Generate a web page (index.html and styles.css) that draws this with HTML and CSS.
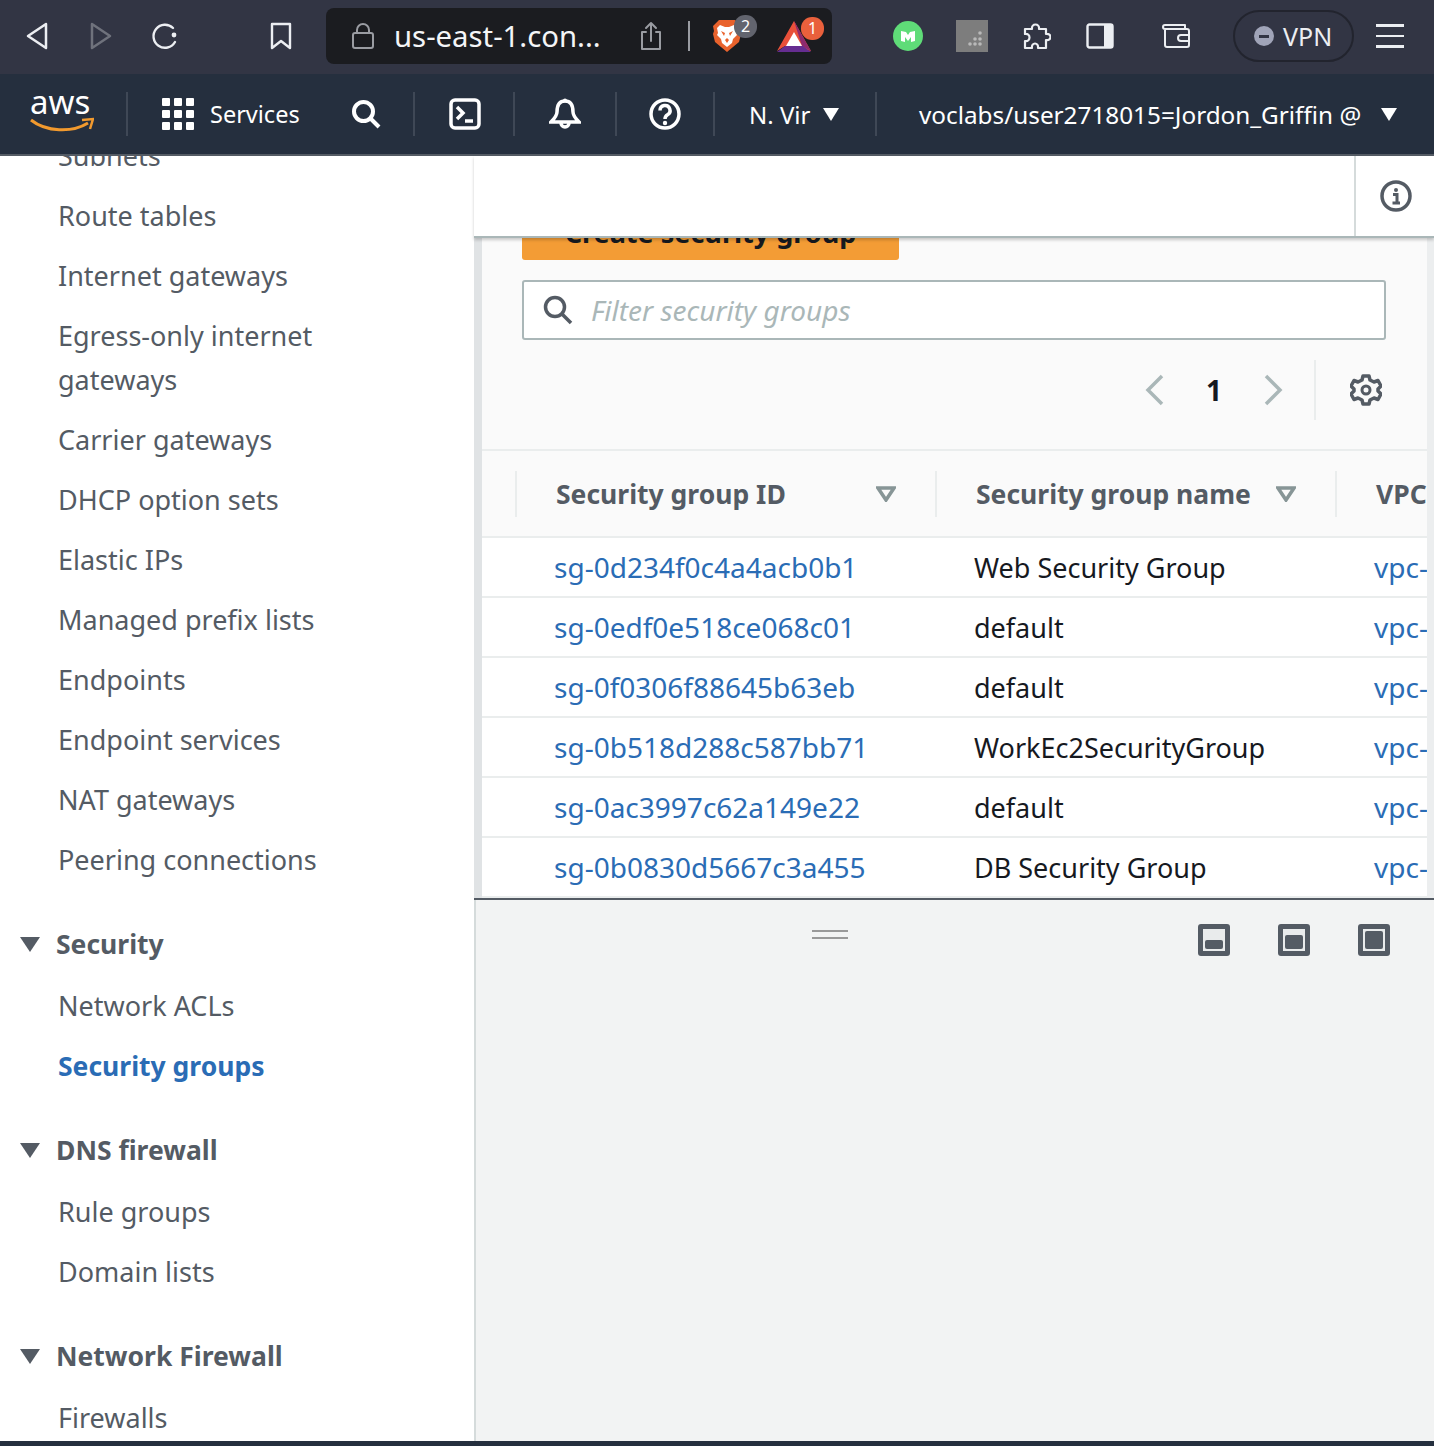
FILE: index.html
```html
<!DOCTYPE html>
<html>
<head>
    <title>Security Groups | VPC Console</title>
    <link rel="stylesheet" href="styles.css">
</head>
<body>
    <!-- Browser toolbar -->
    <div class="toolbar">
        <div class="tb-btn tb-first">
            <svg width="24" height="30" viewBox="0 0 24 30"><path d="M21 3 L3 15 L21 27 Z" class="line" stroke-width="2.5"/></svg>
        </div>
        <div class="tb-btn">
            <svg width="24" height="30" viewBox="0 0 24 30"><path d="M3 3 L21 15 L3 27 Z" class="line dim" stroke-width="2.5"/></svg>
        </div>
        <div class="tb-btn">
            <svg width="30" height="30" viewBox="0 0 30 30"><path d="M23 7 A11.5 11.5 0 1 0 25 21" class="line" stroke-width="2.4"/><circle cx="24" cy="14" r="2.4" fill="#eceef2"/></svg>
        </div>
        <div class="tb-btn tb-bookmark">
            <svg width="22" height="28" viewBox="0 0 22 28"><path d="M2 2 H20 V26 L11 19 L2 26 Z" class="line" stroke-width="2.4"/></svg>
        </div>
        <div class="urlbar">
            <svg class="url-lock" width="24" height="28" viewBox="0 0 24 28"><rect x="2" y="11" width="20" height="15" rx="2" class="line dim2" stroke-width="2"/><path d="M6 11 V8 A6 6 0 0 1 18 8 V11" class="line dim2" stroke-width="2"/></svg>
            <span class="url-text">us-east-1.con...</span>
            <svg class="url-share" width="22" height="30" viewBox="0 0 22 30"><path d="M6 11 H2 V28 H20 V11 H16" class="line dim2" stroke-width="2"/><path d="M11 20 V2 M6 7 L11 2 L16 7" class="line dim2" stroke-width="2"/></svg>
            <span class="url-sep"></span>
            <div class="shield">
                <svg width="30" height="34" viewBox="0 0 30 34"><path d="M7 1 H23 L29 7 L28 12 L29 15 L27 23 L15 33 L3 23 L1 15 L2 12 L1 7 Z" fill="#e9622c"/><path d="M8 6 L13 8 H17 L22 6 L25 9 L24 14 L25 16 L21 20 L20 24 L15 28 L10 24 L9 20 L5 16 L6 14 L5 9 Z" fill="#fff"/><path d="M9 12 L13 14 L12 17 Z M21 12 L17 14 L18 17 Z M13 21 L15 19 L17 21 L15 24 Z" fill="#e9622c"/></svg>
                <span class="badge badge-gray">2</span>
            </div>
            <div class="bat">
                <svg width="36" height="33" viewBox="0 0 36 33"><path d="M18 1 L35 31 L9 26 L1 31 Z" fill="#e9503a"/><path d="M18 1 L35 31 L26 26 Z" fill="#8e2a6e"/><path d="M1 32 L9 26 H27 L35 32 Z" fill="#662d91"/><path d="M18 12 L26 26 H10 Z" fill="#fff"/></svg>
                <span class="badge badge-red">1</span>
            </div>
        </div>
        <div class="tb-btn tb-ext-first">
            <svg width="30" height="30" viewBox="0 0 30 30"><circle cx="15" cy="15" r="15" fill="#5fdc78"/><path d="M8 10 L13 11 L15 14 L17 11 L22 10 V20 L18 21 V16 L15 20 L12 16 V21 L8 20 Z" fill="#fff"/></svg>
        </div>
        <div class="tb-btn">
            <svg width="32" height="32" viewBox="0 0 32 32"><rect width="32" height="32" fill="#7d7d7d"/><g fill="#b9b9b9"><circle cx="24" cy="13" r="1.8"/><circle cx="19" cy="19" r="1.8"/><circle cx="24" cy="19" r="1.8"/><circle cx="14" cy="24" r="1.8"/><circle cx="19" cy="24" r="1.8"/><circle cx="24" cy="24" r="1.8"/></g></svg>
        </div>
        <div class="tb-btn">
            <svg width="30" height="30" viewBox="0 0 30 30"><path d="M4 8 H11 C10 2 19 2 18 8 H25 V13 C31 12 31 20 25 19 V27 H17 C18 21 10 21 11 27 H4 V20 C10 21 10 12 4 13 Z" class="line" stroke-width="2.2"/></svg>
        </div>
        <div class="tb-btn">
            <svg width="28" height="26" viewBox="0 0 28 26"><rect x="1.5" y="1.5" width="25" height="23" rx="2" class="line" stroke-width="2.4"/><path d="M18 1.5 H25 A1.5 1.5 0 0 1 26.5 3 V23 A1.5 1.5 0 0 1 25 24.500 H18 Z" fill="#eceef2"/></svg>
        </div>
        <div class="tb-btn tb-wallet">
            <svg width="28" height="26" viewBox="0 0 28 26"><path d="M3 6 V22 A2 2 0 0 0 5 24 H25 A2 2 0 0 0 27 22 V8 A2 2 0 0 0 25 6 H3 A2 2 0 0 1 3 2 H23 V6" class="line" stroke-width="2"/><path d="M27 12 H19 A2.500 2.500 0 0 0 19 18 H27" class="line" stroke-width="2"/></svg>
        </div>
        <div class="vpn">
            <span class="vpn-dot"></span>
            <span>VPN</span>
        </div>
        <div class="hamburger">
            <span></span><span></span><span></span>
        </div>
    </div>

    <!-- AWS console bar -->
    <div class="consolebar">
        <div class="cb-logo">
            <span class="aws-word">aws</span>
            <svg class="aws-smile" width="64" height="16" viewBox="0 0 64 16"><path d="M1 3 C16 15 42 16 58 6" fill="none" stroke="#f29a2e" stroke-width="3"/><path d="M52 3 L63 2 L60 12" fill="none" stroke="#f29a2e" stroke-width="2.5"/></svg>
        </div>
        <div class="cb-section cb-services">
            <div class="waffle">
                <span></span><span></span><span></span><span></span><span></span><span></span><span></span><span></span><span></span>
            </div>
            <span class="services-label">Services</span>
            <svg class="cb-search" width="30" height="30" viewBox="0 0 30 30"><circle cx="12.500" cy="12.500" r="9.500" fill="none" stroke="#fff" stroke-width="4"/><path d="M19 19 L28 28" stroke="#fff" stroke-width="4"/></svg>
        </div>
        <div class="cb-section cb-icon cb-terminal">
            <svg width="32" height="32" viewBox="0 0 32 32"><rect x="2" y="2" width="28" height="28" rx="4" fill="none" stroke="#fff" stroke-width="3.500"/><path d="M8 9 L14 15 L8 21" fill="none" stroke="#fff" stroke-width="3.500"/><path d="M16 23 H24" stroke="#fff" stroke-width="3.500"/></svg>
        </div>
        <div class="cb-section cb-icon cb-bell">
            <svg width="32" height="32" viewBox="0 0 32 32"><path d="M16 3 C10 3 8 8 8 14 C8 18 5 21 2 24 H30 C27 21 24 18 24 14 C24 8 22 3 16 3 Z" fill="none" stroke="#fff" stroke-width="3.500"/><circle cx="16" cy="2.500" r="2" fill="#fff"/><path d="M12 25 A4 4 0 0 0 20 25" fill="none" stroke="#fff" stroke-width="3.500"/></svg>
        </div>
        <div class="cb-section cb-icon cb-help">
            <svg width="32" height="32" viewBox="0 0 32 32"><circle cx="16" cy="16" r="14" fill="none" stroke="#fff" stroke-width="3.500"/><path d="M11 12.500 A5 5 0 1 1 18.500 16.800 C16.800 17.800 16 18.500 16 21" fill="none" stroke="#fff" stroke-width="3.500"/><circle cx="16" cy="25" r="2.200" fill="#fff"/></svg>
        </div>
        <div class="cb-section cb-region">
            <span>N. Vir</span>
            <span class="caret"></span>
        </div>
        <div class="cb-section cb-account">
            <span>voclabs/user2718015=Jordon_Griffin @</span>
            <span class="caret"></span>
        </div>
    </div>

    <div class="console">
        <!-- Left navigation -->
        <div class="sidenav">
            <ul class="nav-list">
                <li>Subnets</li>
                <li>Route tables</li>
                <li>Internet gateways</li>
                <li>Egress-only internet<br>gateways</li>
                <li>Carrier gateways</li>
                <li>DHCP option sets</li>
                <li>Elastic IPs</li>
                <li>Managed prefix lists</li>
                <li>Endpoints</li>
                <li>Endpoint services</li>
                <li>NAT gateways</li>
                <li>Peering connections</li>
            </ul>
            <h3 class="nav-head"><span class="nav-caret"></span>Security</h3>
            <ul class="nav-list">
                <li>Network ACLs</li>
                <li class="active">Security groups</li>
            </ul>
            <h3 class="nav-head"><span class="nav-caret"></span>DNS firewall</h3>
            <ul class="nav-list">
                <li>Rule groups</li>
                <li>Domain lists</li>
            </ul>
            <h3 class="nav-head"><span class="nav-caret"></span>Network Firewall</h3>
            <ul class="nav-list">
                <li>Firewalls</li>
            </ul>
        </div>

        <div class="content">
            <div class="top-pane">
                <div class="page-header">
                    <div class="info-box">
                        <svg width="32" height="32" viewBox="0 0 32 32"><circle cx="16" cy="16" r="14" fill="none" stroke="#545b64" stroke-width="3.500"/><circle cx="16" cy="10" r="2" fill="#545b64"/><path d="M13 14.500 H17 V22 M12.500 23 H20" fill="none" stroke="#545b64" stroke-width="3"/></svg>
                    </div>
                </div>
                <div class="panel">
                    <div class="panel-scroll">
                        <button class="btn-create">Create security group</button>
                        <div class="filter">
                            <svg width="30" height="30" viewBox="0 0 30 30"><circle cx="12" cy="12" r="9.500" fill="none" stroke="#545b64" stroke-width="3.500"/><path d="M18 18 L28 28" stroke="#545b64" stroke-width="3.500"/></svg>
                            <span class="filter-text">Filter security groups</span>
                        </div>
                        <div class="pager">
                            <svg width="20" height="32" viewBox="0 0 20 32"><path d="M17 2 L3 16 L17 30" fill="none" stroke="#aab7b8" stroke-width="3.500"/></svg>
                            <span class="page-num">1</span>
                            <svg width="20" height="32" viewBox="0 0 20 32"><path d="M3 2 L17 16 L3 30" fill="none" stroke="#aab7b8" stroke-width="3.500"/></svg>
                            <div class="pager-gear">
                                <svg width="32" height="32" viewBox="0 0 32 32"><path d="M13 2 H19 L20 6 L24 8 L28 6.500 L31 12 L28 15 V17 L31 20 L28 25.500 L24 24 L20 26 L19 30 H13 L12 26 L8 24 L4 25.500 L1 20 L4 17 V15 L1 12 L4 6.500 L8 8 L12 6 Z" fill="none" stroke="#545b64" stroke-width="3.500" stroke-linejoin="round"/><circle cx="16" cy="16" r="4" fill="none" stroke="#545b64" stroke-width="3"/></svg>
                            </div>
                        </div>
                        <table class="sg-table">
                            <thead>
                                <tr>
                                    <th class="col-select"></th>
                                    <th class="col-id"><div class="th-in"><span>Security group ID</span><svg class="sort" width="20" height="16" viewBox="0 0 20 16"><path d="M2 2 H18 L10 14 Z" fill="none" stroke="#879596" stroke-width="3.500"/></svg></div></th>
                                    <th class="col-name"><div class="th-in"><span>Security group name</span><svg class="sort" width="20" height="16" viewBox="0 0 20 16"><path d="M2 2 H18 L10 14 Z" fill="none" stroke="#879596" stroke-width="3.500"/></svg></div></th>
                                    <th class="col-vpc"><div class="th-in"><span>VPC</span></div></th>
                                </tr>
                            </thead>
                            <tbody>
                                <tr><td></td><td><a>sg-0d234f0c4a4acb0b1</a></td><td>Web Security Group</td><td><a>vpc-</a></td></tr>
                                <tr><td></td><td><a>sg-0edf0e518ce068c01</a></td><td>default</td><td><a>vpc-</a></td></tr>
                                <tr><td></td><td><a>sg-0f0306f88645b63eb</a></td><td>default</td><td><a>vpc-</a></td></tr>
                                <tr><td></td><td><a>sg-0b518d288c587bb71</a></td><td>WorkEc2SecurityGroup</td><td><a>vpc-</a></td></tr>
                                <tr><td></td><td><a>sg-0ac3997c62a149e22</a></td><td>default</td><td><a>vpc-</a></td></tr>
                                <tr><td></td><td><a>sg-0b0830d5667c3a455</a></td><td>DB Security Group</td><td><a>vpc-</a></td></tr>
                            </tbody>
                        </table>
                    </div>
                </div>
            </div>
            <div class="split-bar">
                <div class="split-handle"></div>
                <div class="split-btns">
                    <span class="split-btn small"><span></span></span>
                    <span class="split-btn medium"><span></span></span>
                    <span class="split-btn large"><span></span></span>
                </div>
            </div>
        </div>
    </div>
    <div class="footer-edge"></div>
</body>
</html>
```

FILE: styles.css
```css
* {
    box-sizing: border-box;
}

html, body {
    height: 100%;
}

body {
    margin: 0;
    height: 100vh;
    overflow: hidden;
    display: flex;
    flex-direction: column;
    font-family: "Noto Sans", Arial, sans-serif;
    font-size: 27px;
    color: #16191f;
    background-color: #f2f3f3;
}

.line {
    fill: none;
    stroke: #eceef2;
    stroke-linejoin: round;
    stroke-linecap: round;
}

.line.dim {
    stroke: #6f727c;
}

.line.dim2 {
    stroke: #9a9ca2;
}

/* Browser toolbar */
.toolbar {
    height: 74px;
    flex: none;
    padding-bottom: 2px;
    display: flex;
    align-items: center;
    background-color: #323544;
}

.tb-btn {
    width: 64px;
    height: 56px;
    flex: none;
    display: flex;
    justify-content: center;
    align-items: center;
}

.tb-first {
    margin-left: 5px;
}

.tb-bookmark {
    margin-left: 52px;
}

.urlbar {
    width: 506px;
    height: 56px;
    margin-left: 13px;
    padding-left: 25px;
    flex: none;
    display: flex;
    align-items: center;
    background-color: #1b1c20;
    border-radius: 8px;
}

.url-text {
    width: 246px;
    margin-left: 19px;
    font-size: 29.3px;
    color: #f4f5f7;
    white-space: nowrap;
}

.url-sep {
    width: 2px;
    height: 30px;
    margin-left: 26px;
    background-color: #9a9ca2;
}

.shield, .bat {
    position: relative;
    display: flex;
}

.shield {
    margin-left: 22px;
}

.bat {
    margin-left: 34px;
}

.badge {
    position: absolute;
    width: 23px;
    height: 23px;
    border-radius: 11px;
    font-size: 16px;
    line-height: 23px;
    text-align: center;
    color: #fff;
}

.shield .badge {
    top: -4px;
    left: 22px;
}

.bat .badge {
    top: -3px;
    left: 25px;
}

.badge-gray {
    background-color: #62646e;
}

.badge-red {
    background-color: #e9603c;
}

.tb-ext-first {
    margin-left: 44px;
}

.tb-wallet {
    margin-left: 12px;
}

.vpn {
    width: 121px;
    height: 52px;
    margin-left: 25px;
    padding-left: 19px;
    flex: none;
    display: flex;
    align-items: center;
    gap: 9px;
    font-size: 25px;
    color: #eceef2;
    border: 2px solid #22242e;
    border-radius: 26px;
}

.vpn-dot {
    width: 20px;
    height: 20px;
    border-radius: 50%;
    background-color: #a0a4b8;
    position: relative;
}

.vpn-dot::after {
    content: "";
    position: absolute;
    left: 5px;
    top: 9px;
    width: 10px;
    height: 3px;
    background-color: #323544;
}

.hamburger {
    width: 28px;
    margin-left: 22px;
    display: flex;
    flex-direction: column;
    gap: 8px;
}

.hamburger span {
    height: 2.5px;
    background-color: #eceef2;
}

/* AWS console bar */
.consolebar {
    height: 82px;
    flex: none;
    display: flex;
    align-items: center;
    background-color: #252f3e;
    border-bottom: 2px solid #545b64;
    color: #fff;
    font-size: 24px;
}

.cb-logo {
    width: 126px;
    padding-left: 30px;
    flex: none;
    position: relative;
}

.aws-word {
    display: block;
    font-size: 33px;
    line-height: 34px;
    margin-top: -10px;
}

.aws-smile {
    display: block;
    margin-top: -2px;
}

.cb-section {
    height: 44px;
    flex: none;
    display: flex;
    align-items: center;
    border-left: 2px solid #3f4856;
}

.cb-services {
    width: 287px;
    padding-left: 34px;
}

.waffle {
    width: 32px;
    display: grid;
    grid-template-columns: repeat(3, 8px);
    gap: 4px;
}

.waffle span {
    height: 8px;
    background-color: #fff;
    border-radius: 1px;
}

.services-label {
    margin-left: 16px;
    font-size: 23.5px;
}

.cb-search {
    margin-left: 51px;
}

.cb-icon {
    justify-content: center;
}

.cb-terminal {
    width: 100px;
    padding-left: 2px;
}

.cb-bell {
    width: 102px;
}

.cb-help {
    width: 98px;
}

.cb-region {
    width: 162px;
    padding-left: 34px;
}

.cb-account {
    padding-left: 42px;
    font-size: 24.3px;
}

.caret {
    width: 0;
    height: 0;
    margin-left: 13px;
    border-left: 8px solid transparent;
    border-right: 8px solid transparent;
    border-top: 13px solid #fff;
}

.cb-account .caret {
    margin-left: 20px;
}

/* Main area */
.console {
    flex: 1;
    min-height: 0;
    display: flex;
}

.sidenav {
    width: 474px;
    flex: none;
    overflow: hidden;
    background-color: #fff;
    color: #545b64;
}

.sidenav .nav-list:first-child {
    margin-top: -30px;
}

.nav-list {
    margin: 0;
    padding: 0;
    list-style: none;
}

.nav-list li {
    padding: 8px 0 8px 58px;
    line-height: 44px;
}

.nav-list li.active {
    color: #2a6cb5;
    font-size: 26.5px;
    font-weight: 700;
}

.nav-head {
    margin: 32px 0 10px;
    height: 44px;
    display: flex;
    align-items: center;
    font-size: 26.5px;
    line-height: 44px;
    font-weight: 700;
    color: #545b64;
}

.nav-caret {
    width: 0;
    height: 0;
    margin: 0 16px 0 20px;
    border-left: 10px solid transparent;
    border-right: 10px solid transparent;
    border-top: 15px solid #545b64;
}

.content {
    flex: 1;
    min-width: 0;
    display: flex;
    flex-direction: column;
}

.top-pane {
    height: 744px;
    flex: none;
    display: flex;
    flex-direction: column;
    background-color: #eceeef;
    border-bottom: 2px solid #545b64;
}

.page-header {
    height: 82px;
    flex: none;
    display: flex;
    justify-content: flex-end;
    background-color: #fff;
    border-bottom: 2px solid #aab7b8;
    box-shadow: 0 2px 3px rgba(0, 0, 0, 0.2);
    position: relative;
    z-index: 1;
}

.info-box {
    width: 80px;
    padding-left: 2px;
    display: flex;
    justify-content: center;
    align-items: center;
    border-left: 2px solid #d5dbdb;
}

.panel {
    flex: 1;
    min-height: 0;
    overflow: hidden;
    background-color: #fafafa;
    margin-right: 7px;
    border-left: 8px solid #e0e3e5;
}

.panel-scroll {
    margin-top: -38px;
}

.btn-create {
    display: block;
    width: 377px;
    height: 60px;
    margin-left: 40px;
    padding: 4px 0 0;
    font-family: inherit;
    font-size: 27px;
    font-weight: 700;
    color: #16191f;
    background-color: #f39c35;
    border: none;
    border-radius: 3px;
}

.filter {
    height: 60px;
    margin: 20px 41px 0 40px;
    padding-left: 19px;
    display: flex;
    align-items: center;
    gap: 18px;
    background-color: #fff;
    border: 2px solid #aab7b8;
    border-radius: 3px;
}

.filter-text {
    font-size: 28px;
    font-style: italic;
    color: #aab7b8;
}

.pager {
    height: 60px;
    margin-top: 20px;
    padding-right: 45px;
    display: flex;
    justify-content: flex-end;
    align-items: center;
}

.page-num {
    width: 98px;
    text-align: center;
    font-size: 28px;
    font-weight: 700;
}

.pager-gear {
    height: 60px;
    margin-left: 31px;
    padding-left: 34px;
    display: flex;
    align-items: center;
    border-left: 2px solid #eaeded;
}

.sg-table {
    width: 1100px;
    margin-top: 29px;
    table-layout: fixed;
    border-collapse: collapse;
}

.sg-table th {
    height: 87px;
    padding: 0;
    background-color: #fafafa;
    border-top: 2px solid #eaeded;
    border-bottom: 2px solid #eaeded;
    font-size: 26.5px;
    font-weight: 700;
    text-align: left;
    color: #545b64;
    white-space: nowrap;
    overflow: hidden;
}

.col-select {
    width: 33px;
}

.col-id {
    width: 420px;
}

.col-name {
    width: 400px;
}

.th-in {
    height: 46px;
    padding: 0 39px 0 39px;
    display: flex;
    justify-content: space-between;
    align-items: center;
    border-left: 2px solid #eaeded;
}

.sg-table td {
    height: 60px;
    padding: 0 0 0 39px;
    background-color: #fff;
    border-bottom: 2px solid #eaeded;
    white-space: nowrap;
    overflow: hidden;
}

.sg-table a {
    font-size: 28px;
    color: #2a6cb5;
}

.split-bar {
    flex: 1;
    display: grid;
    grid-template-columns: 1fr auto;
    align-items: start;
    padding-top: 24px;
    border-left: 2px solid #d5dbdb;
}

.split-handle {
    width: 36px;
    height: 9px;
    margin: 6px 0 0 336px;
    border-top: 2px solid #999;
    border-bottom: 2px solid #999;
}

.split-btns {
    display: flex;
    gap: 48px;
    padding-right: 44px;
}

.split-btn {
    width: 32px;
    height: 32px;
    padding: 2px;
    display: flex;
    align-items: flex-end;
    background-color: #e9ebec;
    border: 5px solid #545b64;
    border-radius: 3px;
}

.split-btn span {
    width: 100%;
    background-color: #545b64;
    border-radius: 2px;
}

.small span {
    height: 50%;
}

.medium span {
    height: 80%;
}

.large span {
    height: 100%;
}

.footer-edge {
    height: 5px;
    flex: none;
    background-color: #252f3e;
}
```
